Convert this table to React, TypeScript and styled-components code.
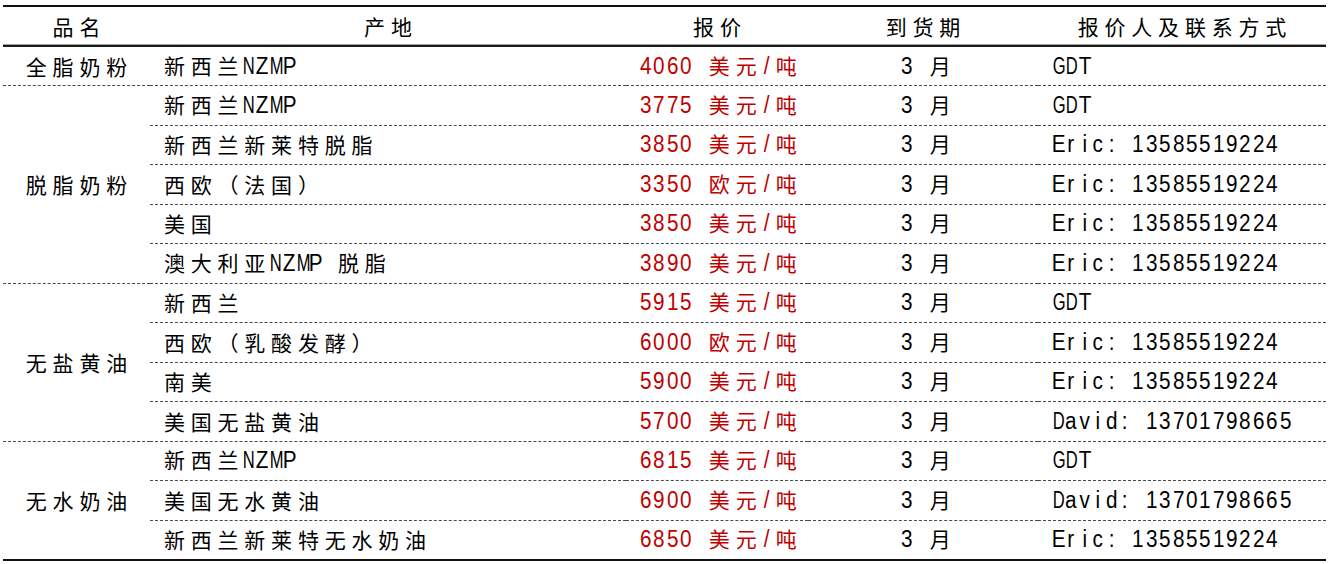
import React from 'react';
import styled, { createGlobalStyle } from 'styled-components';

const GlobalStyle = createGlobalStyle`
  html, body {
    margin: 0;
    padding: 0;
    background: #fff;
  }
  body {
    font-family: "Noto Sans CJK SC", "Liberation Sans", sans-serif;
    color: #000;
  }
`;

type Row = {
  origin: string;
  price: string;
  contact: string;
};

type Group = {
  name: string;
  rows: Row[];
};

const ERIC = 'Eric: 13585519224';
const DAVID = 'David: 13701798665';

const groups: Group[] = [
  {
    name: '全脂奶粉',
    rows: [{ origin: '新西兰NZMP', price: '4060 美元/吨', contact: 'GDT' }]
  },
  {
    name: '脱脂奶粉',
    rows: [
      { origin: '新西兰NZMP', price: '3775 美元/吨', contact: 'GDT' },
      { origin: '新西兰新莱特脱脂', price: '3850 美元/吨', contact: ERIC },
      { origin: '西欧（法国）', price: '3350 欧元/吨', contact: ERIC },
      { origin: '美国', price: '3850 美元/吨', contact: ERIC },
      { origin: '澳大利亚NZMP 脱脂', price: '3890 美元/吨', contact: ERIC }
    ]
  },
  {
    name: '无盐黄油',
    rows: [
      { origin: '新西兰', price: '5915 美元/吨', contact: 'GDT' },
      { origin: '西欧（乳酸发酵）', price: '6000 欧元/吨', contact: ERIC },
      { origin: '南美', price: '5900 美元/吨', contact: ERIC },
      { origin: '美国无盐黄油', price: '5700 美元/吨', contact: DAVID }
    ]
  },
  {
    name: '无水奶油',
    rows: [
      { origin: '新西兰NZMP', price: '6815 美元/吨', contact: 'GDT' },
      { origin: '美国无水黄油', price: '6900 美元/吨', contact: DAVID },
      { origin: '新西兰新莱特无水奶油', price: '6850 美元/吨', contact: ERIC }
    ]
  }
];

const WIDE = /[\u2E80-\u9FFF\u3000-\u303F\uFF00-\uFFEF]/;
const BROAD = /[MWNDGH]/;

// every character sits in a fixed cell, like the original fixed-pitch font
const Txt = ({ children }: { children: string }) => (
  <>
    {Array.from(children).map((ch, i) => (
      <Glyph key={i} $wide={WIDE.test(ch)} $broad={BROAD.test(ch)}>
        {ch === ' ' ? '\u00a0' : ch}
      </Glyph>
    ))}
  </>
);

const App = () => {
  return (
    <Page>
      <GlobalStyle />
      <Table>
        <colgroup>
          <col style={{ width: 147 }} />
          <col style={{ width: 476 }} />
          <col style={{ width: 182 }} />
          <col style={{ width: 230 }} />
          <col style={{ width: 288 }} />
        </colgroup>
        <thead>
          <tr>
            <Th><Txt>品名</Txt></Th>
            <Th><Txt>产地</Txt></Th>
            <Th><Txt>报价</Txt></Th>
            <Th><Txt>到货期</Txt></Th>
            <Th><Txt>报价人及联系方式</Txt></Th>
          </tr>
        </thead>
        <tbody>
          {groups.map((g) =>
            g.rows.map((r, i) => (
              <BodyRow key={g.name + i}>
                {i === 0 && (
                  <Td rowSpan={g.rows.length} $align="center">
                    <Txt>{g.name}</Txt>
                  </Td>
                )}
                <Td $align="left" $pad={11}>
                  <Txt>{r.origin}</Txt>
                </Td>
                <Td $align="left" $red>
                  <Txt>{r.price}</Txt>
                </Td>
                <Td $align="left" $pad={92}>
                  <Txt>3 月</Txt>
                </Td>
                <Td $align="left">
                  <Txt>{r.contact}</Txt>
                </Td>
              </BodyRow>
            ))
          )}
        </tbody>
      </Table>
    </Page>
  );
};

export default App;

const Page = styled.div`
  padding: 5px 5px 0 3px;
  width: 1323px;
`;

const Table = styled.table`
  width: 1323px;
  table-layout: fixed;
  border-collapse: collapse;
  border-top: 2px solid #111;
  border-bottom: 2px solid #111;
`;

const Th = styled.th`
  height: 38px;
  padding: 0;
  font-weight: normal;
  text-align: center;
  vertical-align: middle;
  line-height: 1;
  border-bottom: 2px solid #1a1a1a;
  box-shadow: inset 0 -1px 0 #a0a0a0;
`;

const BodyRow = styled.tr`
  height: 39.5px;
`;

const Td = styled.td<{ $align: 'left' | 'center'; $red?: boolean; $pad?: number }>`
  padding: 0 0 0 ${(p) => (p.$align === 'center' ? 0 : p.$pad ?? 13)}px;
  text-align: ${(p) => p.$align};
  vertical-align: middle;
  line-height: 1;
  white-space: nowrap;
  color: ${(p) => (p.$red ? '#c00000' : '#000')};
  border-top: 1px dashed #4a4a4a;

  tbody tr:first-child > & {
    border-top: none;
  }
`;

const Glyph = styled.span<{ $wide: boolean; $broad: boolean }>`
  display: inline-block;
  width: ${(p) => (p.$wide ? '26.8px' : '13.4px')};
  text-align: center;
  font-family: ${(p) =>
    p.$wide ? '"Noto Sans CJK SC", sans-serif' : '"Liberation Sans", Arial, sans-serif'};
  font-size: ${(p) => (p.$wide ? '21px' : '23px')};
  transform: ${(p) => (p.$wide ? 'none' : p.$broad ? 'scaleX(0.72)' : 'scaleX(0.9)')};
`;
